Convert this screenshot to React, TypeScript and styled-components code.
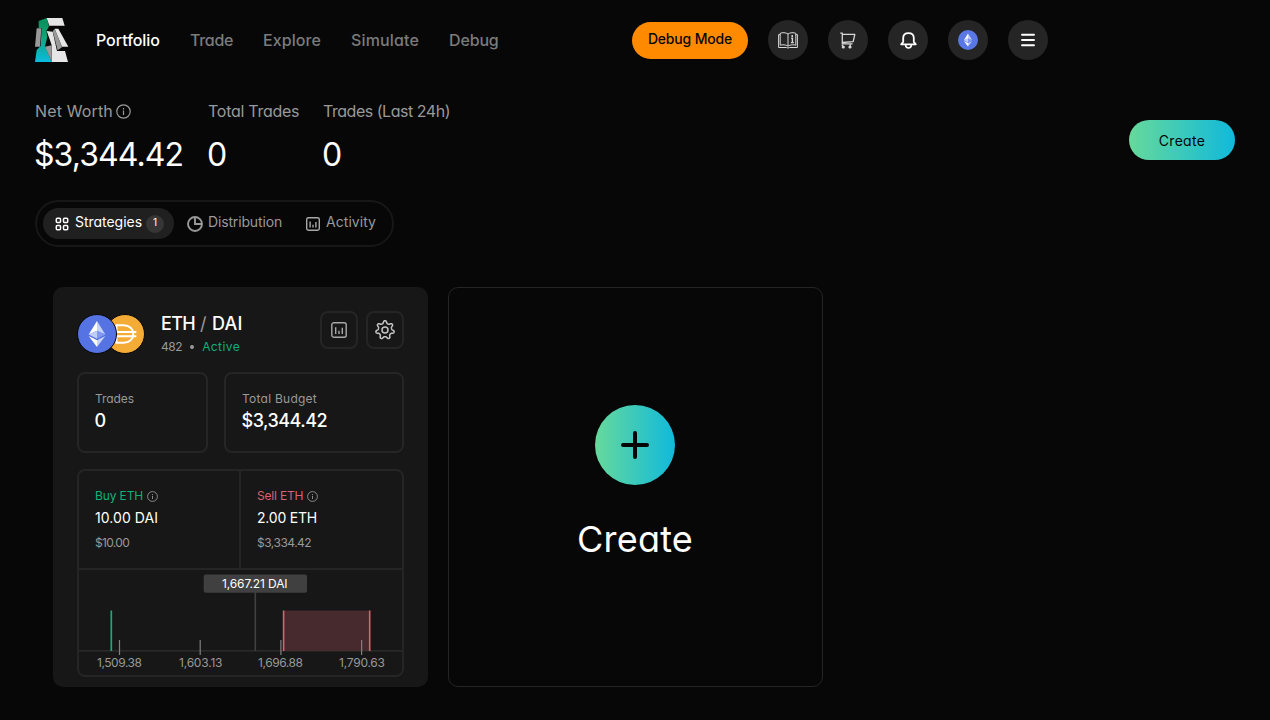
import React from 'react';
import styled, { createGlobalStyle } from 'styled-components';

const GlobalStyle = createGlobalStyle`
  * { box-sizing: border-box; }
  body {
    margin: 0;
    background: #070707;
    color: #fff;
    font-family: Inter, 'Liberation Sans', sans-serif;
    font-feature-settings: 'cv11';
  }
  svg { display: block; flex: none; }
`;

const muted = '#999';
const line = '#252525';
const green = '#0fb07a';
const red = '#d86371';
const brandGradient = 'linear-gradient(90deg, #67d99b, #10b9db)';

const Page = styled.div`
  width: 1270px;
  height: 720px;
  overflow: hidden;
`;

const Header = styled.header`
  display: flex;
  align-items: center;
  width: 1048px;
  height: 80px;
  padding-left: 35px;
`;

const Nav = styled.nav`
  display: flex;
  gap: 30px;
  margin-left: 27px;
`;

const NavItem = styled.a<{ $active?: boolean; $width: number; $spacing: number }>`
  width: ${p => p.$width}px;
  white-space: nowrap;
  font-size: 16px;
  line-height: 24px;
  font-weight: 500;
  letter-spacing: ${p => p.$spacing}px;
  color: ${p => (p.$active ? '#fff' : '#7b7b7b')};
`;

const Tools = styled.div`
  display: flex;
  align-items: center;
  gap: 20px;
  margin-left: auto;
`;

const DebugButton = styled.button`
  width: 116px;
  height: 37px;
  margin-top: 1px;
  padding: 0 0 5px;
  border: 0;
  border-radius: 19px;
  background: #ff8a00;
  color: #070707;
  font: 500 14px Inter, sans-serif;
  font-feature-settings: inherit;
  letter-spacing: -0.17px;
`;

const RoundButton = styled.div`
  display: flex;
  align-items: center;
  justify-content: center;
  width: 40px;
  height: 40px;
  border-radius: 50%;
  background: #252525;
`;

const Summary = styled.section`
  display: flex;
  gap: 24px;
  padding: 19px 35px 0;
`;

const Stat = styled.div<{ $width: number }>`
  width: ${p => p.$width}px;
  white-space: nowrap;
`;

const StatLabel = styled.div<{ $spacing: number }>`
  display: flex;
  align-items: center;
  gap: 3px;
  font-size: 16px;
  line-height: 24px;
  letter-spacing: ${p => p.$spacing}px;
  color: ${muted};
`;

const StatValue = styled.div`
  margin: 12px 0 -1px -1px;
  font-size: 32px;
  line-height: 40px;
  letter-spacing: -0.92px;
`;

const CreateButton = styled.button`
  width: 106px;
  height: 40px;
  margin: 21px 0 0 auto;
  padding: 1px 0 0;
  border: 0;
  border-radius: 20px;
  background: ${brandGradient};
  color: #070707;
  font: 400 14px Inter, sans-serif;
  font-feature-settings: inherit;
  letter-spacing: 0.3px;
`;

const Tabs = styled.div`
  display: flex;
  width: 359px;
  height: 47px;
  margin: 26px 0 0 35px;
  padding: 6px;
  border: 2px solid #171717;
  border-radius: 24px;
`;

const Tab = styled.div<{ $active?: boolean; $width: number; $gap: number }>`
  display: flex;
  align-items: center;
  gap: ${p => p.$gap}px;
  width: ${p => p.$width}px;
  height: 31px;
  padding-left: ${p => (p.$active ? 12 : 13)}px;
  border-radius: 16px;
  background: ${p => (p.$active ? '#202020' : 'transparent')};
  color: ${p => (p.$active ? '#fff' : muted)};
`;

const TabLabel = styled.span<{ $spacing: number }>`
  padding-bottom: 3px;
  font-size: 14px;
  line-height: 20px;
  letter-spacing: ${p => p.$spacing}px;
`;

const Count = styled.span`
  width: 18px;
  height: 18px;
  margin-left: -2px;
  border-radius: 50%;
  background: #363636;
  font-size: 10px;
  line-height: 15px;
  text-align: center;
`;

const Cards = styled.main`
  display: flex;
  gap: 20px;
  padding: 40px 53px 0;
`;

const StrategyCard = styled.article`
  width: 375px;
  height: 400px;
  padding: 24px;
  border-radius: 10px;
  background: #171717;
`;

const CardHeader = styled.div`
  display: flex;
  height: 43px;
  margin-bottom: 18px;
`;

const TokenPair = styled.div`
  width: 68px;
  margin: 3px 16px 0 0;
`;

const PairInfo = styled.div`
  flex: 1;
  padding-top: 1px;
`;

const PairName = styled.div`
  display: flex;
  gap: 5px;
  font-size: 18px;
  line-height: 24px;
  font-weight: 500;
`;

const Slash = styled.span`
  width: 7px;
  font-weight: 400;
  color: ${muted};
`;

const PairMeta = styled.div`
  display: flex;
  align-items: center;
  gap: 8px;
  margin-top: 3px;
  font-size: 12px;
  line-height: 16px;
  color: ${muted};
`;

const Dot = styled.i`
  width: 4px;
  height: 4px;
  border-radius: 50%;
  background: ${muted};
`;

const Word = styled.span<{ $spacing: number; $color?: string }>`
  letter-spacing: ${p => p.$spacing}px;
  color: ${p => p.$color ?? 'inherit'};
`;

const IconButton = styled.div`
  display: flex;
  align-items: center;
  justify-content: center;
  width: 38px;
  height: 38px;
  margin-left: 8px;
  border: 2px solid ${line};
  border-radius: 8px;
`;

const Metrics = styled.div`
  display: grid;
  grid-template-columns: 131px 180px;
  gap: 16px;
`;

const Metric = styled.div`
  height: 81px;
  padding: 17px 16px;
  border: 2px solid ${line};
  border-radius: 8px;
`;

const MetricLabel = styled.div<{ $spacing: number }>`
  font-size: 12px;
  line-height: 16px;
  letter-spacing: ${p => p.$spacing}px;
  color: ${muted};
`;

const MetricValue = styled.div`
  margin: 2px 0 0 -0.5px;
  font-size: 18px;
  line-height: 24px;
  font-weight: 500;
  letter-spacing: -0.5px;
`;

const Orders = styled.div`
  height: 208px;
  margin-top: 16px;
  border: 2px solid ${line};
  border-radius: 8px;
`;

const OrderRow = styled.div`
  display: grid;
  grid-template-columns: 162px 1fr;
  height: 99px;
  border-bottom: 2px solid ${line};
`;

const Order = styled.div`
  padding: 17px 16px 0;
  &:first-child { border-right: 2px solid ${line}; }
`;

const OrderLabel = styled.div<{ $color: string; $spacing: number }>`
  display: flex;
  align-items: center;
  gap: 4px;
  font-size: 12px;
  line-height: 16px;
  letter-spacing: ${p => p.$spacing}px;
  color: ${p => p.$color};
`;

const OrderAmount = styled.div<{ $spacing: number }>`
  margin-top: 4px;
  font-size: 14px;
  line-height: 20px;
  letter-spacing: ${p => p.$spacing}px;
`;

const OrderFiat = styled.div<{ $spacing: number }>`
  margin-top: 7px;
  font-size: 12px;
  line-height: 16px;
  letter-spacing: ${p => p.$spacing}px;
  color: ${muted};
`;

const CreateCard = styled.article`
  display: flex;
  flex-direction: column;
  align-items: center;
  width: 375px;
  height: 400px;
  padding: 117px 1px 0 0;
  border: 1px solid ${line};
  border-radius: 10px;
`;

const PlusCircle = styled.div`
  display: flex;
  align-items: center;
  justify-content: center;
  width: 80px;
  height: 80px;
  border-radius: 50%;
  background: ${brandGradient};
`;

const CreateTitle = styled.div`
  margin-top: 32px;
  font-size: 36px;
  line-height: 44px;
  letter-spacing: 0.22px;
`;

const Logo = () => (
  <svg width="34" height="44" viewBox="45 39 102 132">
    <defs>
      <linearGradient id="logo" x1="0" y1="0" x2="0" y2="1">
        <stop offset="0.1" stopColor="#0a9160" />
        <stop offset="0.4" stopColor="#10a374" />
        <stop offset="1" stopColor="#0bbbe0" />
      </linearGradient>
    </defs>
    <path d="M56 48 80 39 87 64 79 78 82 96 75 124 95 171H45L50 135 62 123 65 69H56Z" fill="url(#logo)" />
    <path d="M80 39H127L134 62H88Z" fill="#e6e6e6" />
    <path d="M50 70H64L60 125H45Z" fill="#999" />
    <path d="M80 78 98 80 111 138H135L144 171H95V121L89 103Z" fill="#e6e6e6" />
    <path d="M75 125 95 121V171Z" fill="#999" />
    <path d="M98 79 104 72 126 127 113 136Z" fill="#999" />
    <path d="M104 71H115L145 125H126Z" fill="#e6e6e6" />
  </svg>
);

const InfoIcon = ({ size }: { size: number }) => (
  <svg width={size} height={size} viewBox="0 0 15 15" fill="none" stroke={muted} strokeWidth="1.2">
    <circle cx="7.5" cy="7.5" r="6.7" />
    <path d="M7.5 6.6V11M7.5 4.1V5.4" />
  </svg>
);

const BookIcon = () => (
  <svg width="20" height="17" viewBox="0 0 20 17" fill="none" stroke="#d8d8d8" strokeWidth="1">
    <path d="M10 2C8 .4 4 .4 2.2 1.3V13.2C4 12.5 8 12.6 10 14.2 12 12.6 16 12.5 17.8 13.2V1.3C16 .4 12 .4 10 2ZM10 2V14" />
    <path d="M2.2 2.6H.6V15.5H8.4Q10 16.6 11.6 15.5H19.4V2.6H17.8" />
    <path d="M13.2 6.3H14.4V10.5M12.9 10.6H15.8" strokeWidth="1.4" />
    <circle cx="14.2" cy="4" r=".9" fill="#eee" stroke="none" />
  </svg>
);

const CartIcon = () => (
  <svg width="16" height="17" viewBox="0 0 16 17" fill="none" stroke="#d8d8d8" strokeWidth="1.3">
    <path d="M.3 1.2H2.3V11.8H12.5M2.3 2.3H14.8L13.2 9.6 2.3 10.5" strokeLinejoin="round" />
    <path d="M2.3 12.4V14M10.2 12V14" />
    <circle cx="3.3" cy="15" r="1.6" fill="#d8d8d8" stroke="none" />
    <circle cx="10" cy="15" r="1.6" fill="#d8d8d8" stroke="none" />
  </svg>
);

const BellIcon = () => (
  <svg width="17" height="17" viewBox="0 0 17 17" fill="none" stroke="#fff" strokeWidth="1.8" strokeLinejoin="round" strokeLinecap="round">
    <path d="M1.2 12.3H15.8L13.8 9.9V6.1C13.8 3 11.6 1.1 8.5 1.1S3.2 3 3.2 6.1V9.9Z" />
    <path d="M5.5 12.7C5.7 14.8 6.8 16 8.5 16S11.3 14.8 11.5 12.7" strokeWidth="1.6" />
  </svg>
);

const EthGlyph = () => (
  <g>
    <path d="M20 7V16.8L28.3 20.5Z" fill="#c7d2f7" />
    <path d="M20 7 11.7 20.5 20 16.8Z" fill="#fff" />
    <path d="M20 26.2V33L28.3 22Z" fill="#c7d2f7" />
    <path d="M20 33V26.2L11.7 22Z" fill="#fff" />
    <path d="M20 24.8 28.3 20.5 20 16.8Z" fill="#8299ef" />
    <path d="M11.7 20.5 20 24.8V16.8Z" fill="#c0cdf9" />
  </g>
);

const EthIcon = () => (
  <svg width="20" height="20" viewBox="0 0 40 40">
    <circle cx="20" cy="20" r="20" fill="#5a78e5" />
    <EthGlyph />
  </svg>
);

const MenuIcon = () => (
  <svg width="14" height="14" viewBox="0 0 14 14" stroke="#fff" strokeWidth="1.9" strokeLinecap="round">
    <path d="M1 1.7H13M1 7H13M1 12.3H13" />
  </svg>
);

const TokenIcons = () => (
  <svg width="68" height="40" viewBox="0 0 68 40">
    <circle cx="48" cy="20" r="19.5" fill="#f5ac37" stroke="#070707" />
    <g fill="none" stroke="#fff" strokeWidth="1.9">
      <path d="M39.5 17V11.2H46.5C52.5 11.2 56.3 15 56.3 20S52.5 28.8 46.5 28.8H39.5V23" />
      <path d="M38 18H59.3M38 22.3H59.3" />
    </g>
    <circle cx="20" cy="20" r="19.5" fill="#5673e3" stroke="#070707" />
    <EthGlyph />
  </svg>
);

const GridIcon = () => (
  <svg width="14" height="14" viewBox="0 0 14 14" fill="none" stroke="#fff" strokeWidth="1.5">
    <rect x="1.3" y="1.3" width="4.2" height="4.2" rx="1" />
    <rect x="8.5" y="1.3" width="4.2" height="4.2" rx="1" />
    <rect x="1.3" y="8.5" width="4.2" height="4.2" rx="1" />
    <rect x="8.5" y="8.5" width="4.2" height="4.2" rx="1" />
  </svg>
);

const PieIcon = () => (
  <svg width="16" height="17" viewBox="0 0 16 17" fill="none" stroke={muted} strokeWidth="1.9">
    <circle cx="8" cy="9" r="7" />
    <path d="M8 2V9H15" />
  </svg>
);

const ChartIcon = ({ size, stroke }: { size: number; stroke: number }) => (
  <svg width={size} height={size} viewBox="0 0 16 16" fill="none" stroke="#a8a8a8" strokeWidth={stroke}>
    <rect x=".8" y=".8" width="14.4" height="14.4" rx="2" />
    <path d="M4.7 5.2V12M8 8.8V12M11.3 5.8V12" />
  </svg>
);

// Seven rounded teeth: an outer radius on the teeth, an inner one between them.
const gearPath = (() => {
  const points: string[] = [];
  for (let i = 0; i <= 210; i += 1) {
    const angle = (i / 210) * Math.PI * 2;
    const wave = Math.tanh(1.5 * Math.cos(7 * angle) - 0.4);
    const radius = 8.1 + 1.5 * wave;
    points.push(`${(10 + radius * Math.sin(angle)).toFixed(2)} ${(10 - radius * Math.cos(angle)).toFixed(2)}`);
  }
  return `M${points.join('L')}Z`;
})();

const GearIcon = () => (
  <svg width="20" height="20" viewBox="0 0 20 20" fill="none" stroke="#c4c4c4" strokeWidth="1.5">
    <path d={gearPath} strokeLinejoin="round" />
    <circle cx="10" cy="10" r="3" />
  </svg>
);

const PlusIcon = () => (
  <svg width="28" height="28" viewBox="0 0 28 28" stroke="#070707" strokeWidth="4" strokeLinecap="round">
    <path d="M14 2V26M2 14H26" />
  </svg>
);

const ticks = [
  { x: 119.5, label: '1,509.38', from: 97, width: 45 },
  { x: 200.2, label: '1,603.13', from: 179, width: 43.5 },
  { x: 280.9, label: '1,696.88', from: 258, width: 45 },
  { x: 361.6, label: '1,790.63', from: 339, width: 46 },
];

const PriceChart = () => (
  <svg width="323" height="105" viewBox="79 570 323 105" fontFamily="Inter, sans-serif" fontSize="12">
    <path d="M79 650.8H402" stroke="#303030" strokeWidth="1.3" />
    <path d="M255.3 592V651" stroke="#404040" strokeWidth="1.6" />
    <rect x="283.5" y="610.5" width="86.5" height="40.5" fill="#472a2e" />
    <path d="M283.6 610.5V651M369.7 610.5V651" stroke={red} strokeWidth="1.6" />
    <path d="M111.3 610.5V651" stroke={green} strokeWidth="1.7" />
    {ticks.map(tick => (
      <g key={tick.label}>
        <path d={`M${tick.x} 640V655`} stroke="#808080" strokeWidth="1.2" />
        <text x={tick.from} y="667" textLength={tick.width} fill={muted}>{tick.label}</text>
      </g>
    ))}
    <rect x="203.7" y="574.5" width="103.3" height="18.3" rx="2" fill="#404040" />
    <text x="222" y="588" textLength="65.5" fill="#fff">1,667.21 DAI</text>
  </svg>
);

export default function App() {
  return (
    <Page>
      <GlobalStyle />
      <Header>
        <Logo />
        <Nav>
          <NavItem $active $width={64} $spacing={-0.04}>Portfolio</NavItem>
          <NavItem $width={43} $spacing={-0.3}>Trade</NavItem>
          <NavItem $width={58} $spacing={0.08}>Explore</NavItem>
          <NavItem $width={68} $spacing={0.15}>Simulate</NavItem>
          <NavItem $width={50} $spacing={-0.15}>Debug</NavItem>
        </Nav>
        <Tools>
          <DebugButton>Debug Mode</DebugButton>
          <RoundButton><BookIcon /></RoundButton>
          <RoundButton><CartIcon /></RoundButton>
          <RoundButton><BellIcon /></RoundButton>
          <RoundButton><EthIcon /></RoundButton>
          <RoundButton><MenuIcon /></RoundButton>
        </Tools>
      </Header>

      <Summary>
        <Stat $width={149}>
          <StatLabel $spacing={0.15}>Net Worth<InfoIcon size={15} /></StatLabel>
          <StatValue>$3,344.42</StatValue>
        </Stat>
        <Stat $width={91}>
          <StatLabel $spacing={-0.27}>Total Trades</StatLabel>
          <StatValue>0</StatValue>
        </Stat>
        <Stat $width={127}>
          <StatLabel $spacing={-0.47}>Trades (Last 24h)</StatLabel>
          <StatValue>0</StatValue>
        </Stat>
        <CreateButton>Create</CreateButton>
      </Summary>

      <Tabs>
        <Tab $active $width={131} $gap={6}>
          <GridIcon />
          <TabLabel $spacing={-0.03}>Strategies</TabLabel>
          <Count>1</Count>
        </Tab>
        <Tab $width={119} $gap={5}>
          <PieIcon />
          <TabLabel $spacing={-0.15}>Distribution</TabLabel>
        </Tab>
        <Tab $width={93} $gap={6}>
          <ChartIcon size={14} stroke={1.6} />
          <TabLabel $spacing={0.05}>Activity</TabLabel>
        </Tab>
      </Tabs>

      <Cards>
        <StrategyCard>
          <CardHeader>
            <TokenPair><TokenIcons /></TokenPair>
            <PairInfo>
              <PairName>
                <Word $spacing={-0.67}>ETH</Word>
                <Slash>/</Slash>
                <Word $spacing={0.2}>DAI</Word>
              </PairName>
              <PairMeta>
                <Word $spacing={-0.45}>482</Word>
                <Dot />
                <Word $spacing={0.4} $color={green}>Active</Word>
              </PairMeta>
            </PairInfo>
            <IconButton><ChartIcon size={16} stroke={1.4} /></IconButton>
            <IconButton><GearIcon /></IconButton>
          </CardHeader>

          <Metrics>
            <Metric>
              <MetricLabel $spacing={-0.07}>Trades</MetricLabel>
              <MetricValue>0</MetricValue>
            </Metric>
            <Metric>
              <MetricLabel $spacing={0.25}>Total Budget</MetricLabel>
              <MetricValue>$3,344.42</MetricValue>
            </Metric>
          </Metrics>

          <Orders>
            <OrderRow>
              <Order>
                <OrderLabel $color={green} $spacing={-0.12}>Buy ETH<InfoIcon size={11} /></OrderLabel>
                <OrderAmount $spacing={0.06}>10.00 DAI</OrderAmount>
                <OrderFiat $spacing={-0.67}>$10.00</OrderFiat>
              </Order>
              <Order>
                <OrderLabel $color={red} $spacing={-0.2}>Sell ETH<InfoIcon size={11} /></OrderLabel>
                <OrderAmount $spacing={-0.2}>2.00 ETH</OrderAmount>
                <OrderFiat $spacing={-0.5}>$3,334.42</OrderFiat>
              </Order>
            </OrderRow>
            <PriceChart />
          </Orders>
        </StrategyCard>

        <CreateCard>
          <PlusCircle><PlusIcon /></PlusCircle>
          <CreateTitle>Create</CreateTitle>
        </CreateCard>
      </Cards>
    </Page>
  );
}
